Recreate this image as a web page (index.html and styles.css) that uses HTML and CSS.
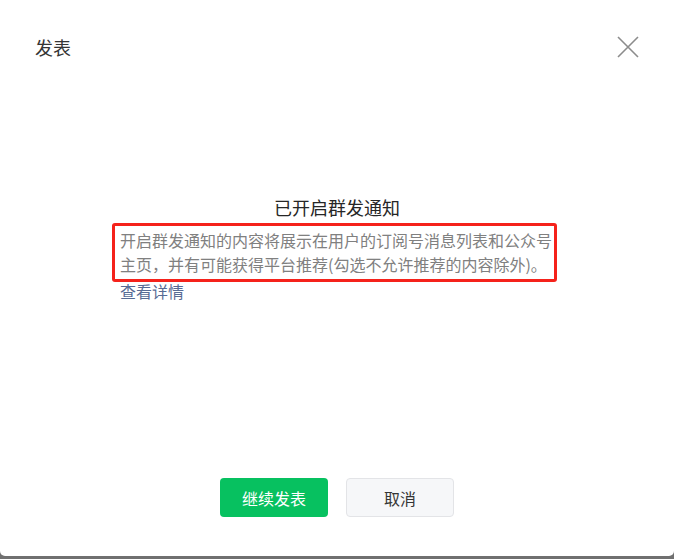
FILE: index.html
```html
<!DOCTYPE html>
<html lang="zh-CN">
<head>
    <meta charset="UTF-8">
    <meta name="viewport" content="width=device-width, initial-scale=1.0">
    <title>发表</title>
    <link rel="stylesheet" href="styles.css">
</head>
<body>

<div class="dialog">
    <div class="dialog-header">
        <h3 class="dialog-title">发表</h3>
        <button class="close-btn" aria-label="关闭">
            <svg width="22" height="22" viewBox="0 0 22 22">
                <path d="M1 1 L21 21 M21 1 L1 21" stroke="#8c8c8c" stroke-width="1.6" fill="none"/>
            </svg>
        </button>
    </div>

    <div class="dialog-body">
        <h4 class="notice-title">已开启群发通知</h4>
        <div class="notice-wrap">
            <p class="notice">开启群发通知的内容将展示在用户的订阅号消息列表和公众号主页，并有可能获得平台推荐(勾选不允许推荐的内容除外)。</p>
            <a class="notice-link" href="#">查看详情</a>
        </div>
    </div>

    <div class="dialog-footer">
        <button class="btn btn-primary">继续发表</button>
        <button class="btn btn-default">取消</button>
    </div>
</div>

</body>
</html>
```

FILE: styles.css
```css
body {
    margin: 0;
    height: 559px;
    background-color: #707070;
    font-family: "Microsoft YaHei", "Noto Sans CJK SC", sans-serif;
}

.dialog {
    height: 556px;
    background-color: #fff;
    border-radius: 0 0 5px 5px;
    display: flex;
    flex-direction: column;
}

.dialog-header {
    display: flex;
    justify-content: space-between;
    align-items: center;
    padding: 32px 36px 0 35px;
    height: 30px;
}

.dialog-title {
    margin: 0;
    font-size: 18px;
    font-weight: normal;
    color: #353535;
    line-height: 32px;
}

.close-btn {
    border: none;
    background: none;
    padding: 0;
    width: 22px;
    height: 22px;
    margin-right: -1px;
    cursor: pointer;
}

.close-btn svg {
    display: block;
}

.dialog-body {
    flex: 1;
    display: flex;
    flex-direction: column;
    align-items: center;
    padding-top: 132px;
}

.notice-title {
    margin: 0;
    font-size: 18px;
    font-weight: normal;
    color: #262626;
    line-height: 26px;
}

.notice-wrap {
    width: 434px;
    margin-top: 8px;
}

.notice {
    position: relative;
    margin: 0;
    font-size: 16px;
    line-height: 24px;
    color: #808080;
}

/* red annotation box over the paragraph */
.notice::after {
    content: '';
    position: absolute;
    left: -8px;
    top: -5px;
    right: -3px;
    bottom: -6px;
    border: 3px solid #f5221b;
    border-radius: 3px;
}

.notice-link {
    display: block;
    margin-top: 3px;
    font-size: 16px;
    line-height: 24px;
    color: #576b95;
    text-decoration: none;
}

.dialog-footer {
    display: flex;
    justify-content: center;
    gap: 18px;
    padding-bottom: 39px;
}

.btn {
    width: 108px;
    height: 39px;
    border-radius: 4px;
    font-family: inherit;
    font-size: 16px;
    cursor: pointer;
}

.btn-primary {
    background-color: #07c160;
    border: none;
    color: #fff;
}

.btn-default {
    background-color: #f6f7f9;
    border: 1px solid #e3e4e7;
    color: #353535;
}
```
